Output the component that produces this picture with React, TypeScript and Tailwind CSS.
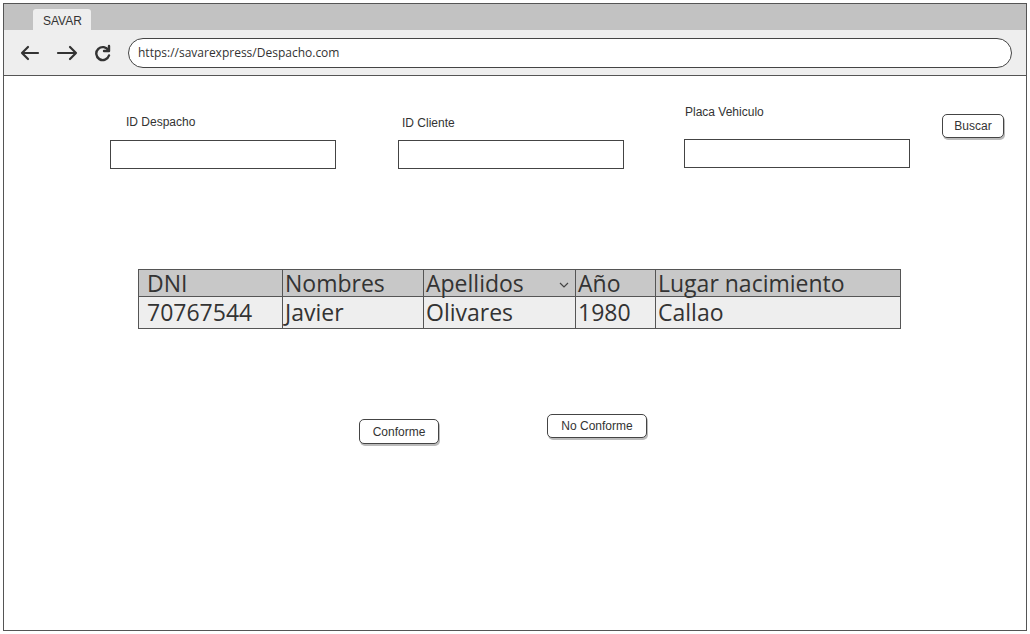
import React from 'react';

const sketchFont = { fontFamily: '"Liberation Sans", Arial, sans-serif' };
const handFont = { fontFamily: '"Open Sans", "Liberation Sans", sans-serif' };

const Field = ({ label, labelClass }: { label: string; labelClass: string }) => (
  <div className="flex flex-col w-[226px]">
    <span className={`text-[12px] text-[#333] ${labelClass}`}>{label}</span>
    <div className="h-[29px] border-[1.5px] border-[#444] bg-white" />
  </div>
);

const columns = [
  { name: 'DNI', width: 'w-[144px]', pad: 'pl-2' },
  { name: 'Nombres', width: 'w-[141px]', pad: 'pl-0.5' },
  { name: 'Apellidos', width: 'w-[152px]', pad: 'pl-0.5' },
  { name: 'Año', width: 'w-[80px]', pad: 'pl-0.5' },
  { name: 'Lugar nacimiento', width: 'flex-1', pad: 'pl-0.5' },
];

const row = ['70767544', 'Javier', 'Olivares', '1980', 'Callao'];

export default function App() {
  return (
    <div className="w-[1030px] h-[634px] bg-white p-[3px]" style={sketchFont}>
      <div className="h-full border-[1.5px] border-[#555] flex flex-col">
        {/* tab strip */}
        <div className="h-[26px] bg-[#c2c2c2] flex items-end pl-[29px]">
          <div className="w-[58px] h-[21px] bg-[#eeeeee] rounded-t-[3px] text-[12px] text-[#333] pl-[10px] pt-[3px]">
            SAVAR
          </div>
        </div>
        {/* toolbar */}
        <div className="h-[46px] bg-[#eeeeee] border-b-[1.5px] border-[#555] flex items-center pl-[16px] pr-[14px]">
          <div className="flex items-center gap-[16px] text-[#333]">
            <svg width="20" height="16" viewBox="0 0 20 16" fill="none" stroke="#333" strokeWidth="2.2" strokeLinecap="round" strokeLinejoin="round">
              <path d="M18 8H2M8 2L2 8l6 6" />
            </svg>
            <svg width="22" height="16" viewBox="0 0 22 16" fill="none" stroke="#333" strokeWidth="2.2" strokeLinecap="round" strokeLinejoin="round">
              <path d="M2 8h18M14 2l6 6-6 6" />
            </svg>
            <svg width="18" height="18" viewBox="0 0 18 18" fill="none" stroke="#333" strokeWidth="2.4" strokeLinecap="round" strokeLinejoin="round">
              <path d="M14.5 6.5A6.5 6.5 0 1 0 15 11.5" />
              <path d="M15 2v5h-5" />
            </svg>
          </div>
          <div className="ml-[16px] flex-1 h-[30px] bg-white border-[1.5px] border-[#444] rounded-full flex items-center pl-[9px] text-[12px] text-[#333]" style={handFont}>
            https://savarexpress/Despacho.com
          </div>
        </div>
        {/* content */}
        <div className="flex-1 flex flex-col">
          <div className="flex items-start pl-[106px] pt-[36px]">
            <Field label="ID Despacho" labelClass="pl-4 pt-[1px] pb-[9px]" />
            <div className="ml-[62px]">
              <Field label="ID Cliente" labelClass="pl-1 pt-[2px] pb-[8px]" />
            </div>
            <div className="ml-[60px]">
              <Field label="Placa Vehiculo" labelClass="pl-[1px] -mt-[9px] pb-[18px]" />
            </div>
            <button className="ml-[32px] mt-[2px] w-[62px] h-[24px] bg-white border-[1.5px] border-[#444] rounded-[5px] shadow-[1px_2px_0_#bbb] text-[12px] text-[#333]">
              Buscar
            </button>
          </div>

          {/* table */}
          <div className="ml-[134px] mt-[100px] w-[763px] border-[1.5px] border-[#555] text-[23px] leading-none text-[#333]" style={handFont}>
            <div className="flex h-[27px] bg-[#c8c8c8] border-b-[1.5px] border-[#555]">
              {columns.map((c, i) => (
                <div
                  key={c.name}
                  className={`${c.width} ${c.pad} flex items-center ${i < columns.length - 1 ? 'border-r-[1.5px] border-[#555]' : ''}`}
                >
                  <span>{c.name}</span>
                  {c.name === 'Apellidos' && (
                    <svg className="ml-auto mr-[6px] mt-[4px]" width="10" height="6" viewBox="0 0 10 6" fill="none" stroke="#444" strokeWidth="1.2">
                      <path d="M1 1l4 4 4-4" />
                    </svg>
                  )}
                </div>
              ))}
            </div>
            <div className="flex h-[31px] bg-[#eeeeee]">
              {columns.map((c, i) => (
                <div
                  key={c.name}
                  className={`${c.width} ${c.pad} flex items-center ${i < columns.length - 1 ? 'border-r-[1.5px] border-[#555]' : ''}`}
                >
                  {row[i]}
                </div>
              ))}
            </div>
          </div>

          {/* actions */}
          <div className="flex items-start ml-[355px] mt-[85px]">
            <button className="mt-[5px] w-[80px] h-[25px] bg-white border-[1.5px] border-[#444] rounded-[5px] shadow-[1px_2px_0_#bbb] text-[12px] text-[#333]">
              Conforme
            </button>
            <button className="ml-[108px] w-[100px] h-[24px] bg-white border-[1.5px] border-[#444] rounded-[5px] shadow-[1px_2px_0_#bbb] text-[12px] text-[#333]">
              No Conforme
            </button>
          </div>
        </div>
      </div>
    </div>
  );
}
